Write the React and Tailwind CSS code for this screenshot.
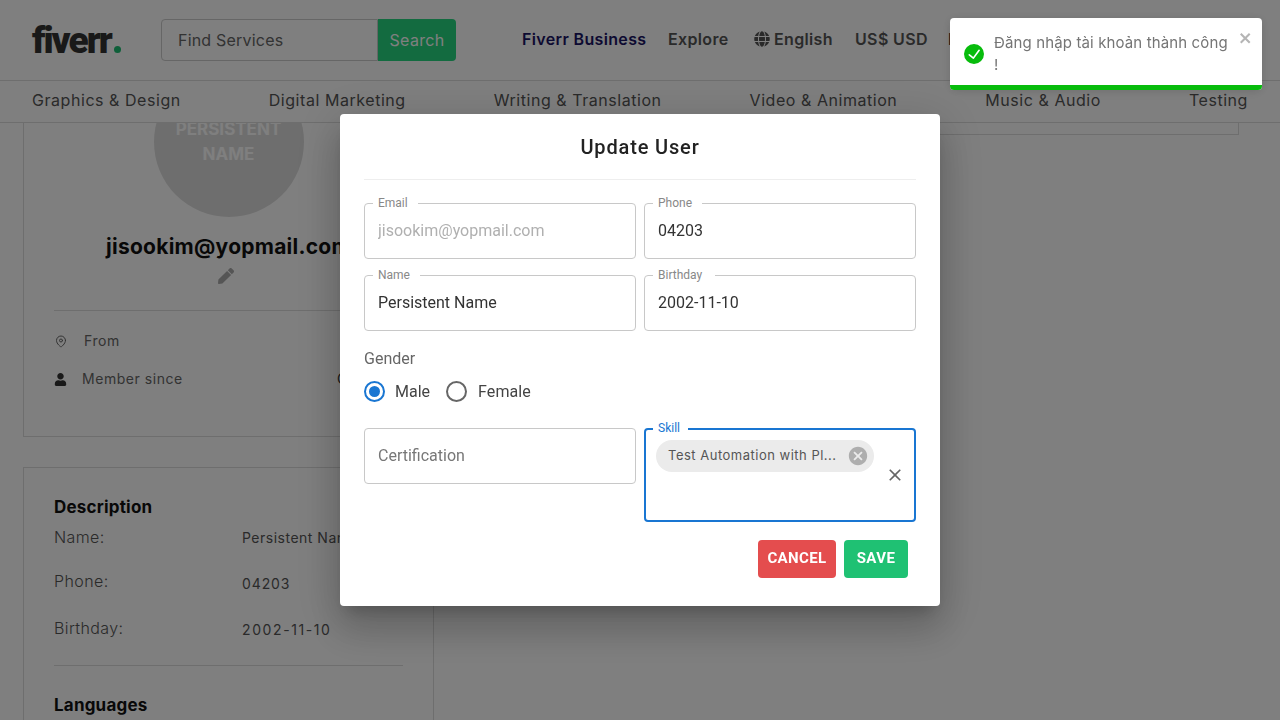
import React from 'react';
import { FaGlobe, FaPen, FaUser } from 'react-icons/fa';
import { FiMapPin } from 'react-icons/fi';

const categories = ['Graphics & Design', 'Digital Marketing', 'Writing & Translation', 'Video & Animation', 'Music & Audio', 'Testing'];

function Field({ label, value, disabled, notch = 'pr-[10px]' }) {
  return (
    <div className="relative h-14 rounded border border-[#c8c8c8]">
      <span className={`absolute -top-[8px] left-[8px] bg-white pl-[5px] text-xs leading-[14px] text-[#888] ${notch}`}>{label}</span>
      <input
        readOnly
        value={value}
        className={`h-full w-full rounded bg-transparent px-[13px] pb-[2px] text-base outline-none ${disabled ? 'text-[#b0b0b0]' : 'text-[#333]'}`}
      />
    </div>
  );
}

function InfoRow({ label, value, rowClass, valueClass }) {
  return (
    <div className={`flex items-start ${rowClass}`}>
      <span className="w-[188px] text-base leading-6 font-light tracking-[0.4px] text-[#555]">{label}</span>
      <span className={`whitespace-nowrap text-sm leading-5 text-[#555] ${valueClass}`}>{value}</span>
    </div>
  );
}

export default function App() {
  return (
    <div className="h-screen overflow-hidden bg-white font-[Inter,sans-serif]">
      <header className="relative z-10 bg-white">
        <div className="flex h-[81px] items-center border-b border-[#ddd] pl-8">
          <div className="flex w-[129px] items-baseline font-[Roboto,sans-serif] text-[37px] leading-none font-black tracking-[-2px] text-[#333]">
            fiverr<span className="ml-[3px] h-[7px] w-[7px] rounded-full bg-[#1dbf73]"></span>
          </div>
          <div className="flex h-[42px] w-[295px]">
            <input
              placeholder="Find Services"
              className="min-w-0 flex-1 rounded-l border border-[#ccc] px-4 text-base tracking-[0.2px] text-[#666] outline-none placeholder:text-[#666]"
            />
            <button className="w-[78px] rounded-r bg-[#26d680] text-base tracking-[0.3px] text-white">Search</button>
          </div>
          <nav className="ml-[66px] flex items-center whitespace-nowrap pb-[2px] text-base font-semibold tracking-[0.35px] text-[#555]">
            <a className="w-[146px] text-[#1b1464]">Fiverr Business</a>
            <a className="w-[86px]">Explore</a>
            <FaGlobe className="mr-[4px] text-base" />
            <a className="w-[81px]">English</a>
            <a className="w-[93px]">US$ USD</a>
            <a className="text-[#333]">Become a Seller</a>
          </nav>
        </div>
        <div className="flex h-[42px] items-center justify-between border-b border-[#ddd] px-8 pb-1 text-base tracking-[0.55px] text-[#555]">
          {categories.map((c) => <a key={c}>{c}</a>)}
        </div>
      </header>

      <main className="-mt-[87px] flex gap-[30px] pl-[23px] pr-[41px]">
        <div className="w-[411px] shrink-0">
          <section className="h-[401px] border border-[#ddd] px-[30px] pt-[30px]">
            <div className="mx-auto flex h-[150px] w-[150px] items-center justify-center rounded-full bg-[#ddd] pb-[1px] text-center text-[17px] leading-[25px] font-bold text-white">
              PERSISTENT<br />NAME
            </div>
            <h2 className="mt-[15px] whitespace-nowrap text-center text-[21px] leading-[30px] font-bold tracking-[0.25px] text-[#111]">jisookim@yopmail.com</h2>
            <FaPen className="ml-[164px] mt-[6px] text-base text-[#aaa]" />
            <hr className="mt-[26px] border-[#ddd]" />
            <div className="mt-[20px] flex items-center text-sm tracking-[0.55px] text-[#666]">
              <FiMapPin className="ml-[1px] w-[28px] pr-[16px] text-[13px]" />
              <span className="pl-[1px]">From</span>
            </div>
            <div className="mt-[18px] flex items-center text-sm tracking-[0.55px] text-[#666]">
              <FaUser className="mr-[15px] text-[13px] text-[#333]" />
              <span>Member since</span>
              <span className="ml-auto w-[66px] whitespace-nowrap text-[#333]">Oct 2022</span>
            </div>
          </section>

          <section className="mt-[30px] h-[400px] border border-[#ddd] px-[30px] pt-[29px]">
            <h3 className="text-[17px] leading-[20px] font-bold tracking-[0.2px] text-[#111]">Description</h3>
            <InfoRow label="Name:" value="Persistent Name" rowClass="mt-[8px]" valueClass="mt-[3px] tracking-[0.5px]" />
            <InfoRow label="Phone:" value="04203" rowClass="mt-[20px]" valueClass="mt-[5px] tracking-[0.9px]" />
            <InfoRow label="Birthday:" value="2002-11-10" rowClass="mt-[22px]" valueClass="mt-[4px] tracking-[1.6px]" />
            <hr className="mt-[25px] border-[#ddd]" />
            <h3 className="mt-[29px] text-[17px] leading-[20px] font-bold tracking-[0.2px] text-[#111]">Languages</h3>
          </section>
        </div>
        <section className="h-[99px] flex-1 border border-[#ddd]"></section>
      </main>

      {/* modal */}
      <div className="fixed inset-0 z-20 flex items-center justify-center bg-black/50 font-[Roboto,sans-serif]">
        <div className="h-[492px] w-[600px] rounded bg-white px-6 shadow-[0_11px_15px_-7px_rgba(0,0,0,0.2),0_24px_38px_3px_rgba(0,0,0,0.14),0_9px_46px_8px_rgba(0,0,0,0.12)]">
          <h2 className="h-[66px] border-b border-[#eee] pt-[19px] text-center text-xl leading-[28px] font-medium tracking-[0.85px] text-[#222]">Update User</h2>
          <div className="mt-[23px] grid grid-cols-2 gap-x-2 gap-y-4">
            <Field label="Email" value="jisookim@yopmail.com" disabled />
            <Field label="Phone" value="04203" />
            <Field label="Name" value="Persistent Name" />
            <Field label="Birthday" value="2002-11-10" notch="pr-[13px]" />
          </div>
          <p className="mt-[18px] text-base leading-[20px] text-[#666]">Gender</p>
          <div className="mt-[10px] flex h-[24px] items-center text-base text-[#444]">
            <span className="flex h-[21px] w-[21px] items-center justify-center rounded-full border-2 border-[#1976d2]">
              <span className="h-[11px] w-[11px] rounded-full bg-[#1976d2]"></span>
            </span>
            <span className="ml-[10px] mt-[2px]">Male</span>
            <span className="ml-[16px] h-[21px] w-[21px] rounded-full border-2 border-[#666]"></span>
            <span className="ml-[11px] mt-[2px] tracking-[0.1px]">Female</span>
          </div>
          <div className="mt-[25px] grid grid-cols-2 items-start gap-x-2">
            <div className="h-14 rounded border border-[#c8c8c8]">
              <input placeholder="Certification" className="h-full w-full bg-transparent px-[13px] pb-[2px] text-base outline-none placeholder:text-[#777]" />
            </div>
            <div className="relative flex h-[94px] items-start rounded border-2 border-[#1976d2] pl-[10px] pt-[10px]">
              <span className="absolute -top-[9px] left-[7px] bg-white pl-[5px] pr-[8px] text-xs leading-[14px] text-[#1976d2]">Skill</span>
              <span className="flex h-8 w-[218px] items-center rounded-full bg-[#ebebeb] pl-3 pr-[5px] font-[Inter,sans-serif] text-[13px] tracking-[0.5px] text-[#555]">
                <span className="flex-1 whitespace-nowrap">Test Automation with Pl...</span>
                <svg viewBox="0 0 24 24" className="h-[22px] w-[22px] fill-[#aeaeae]">
                  <path d="M12 2C6.47 2 2 6.47 2 12s4.47 10 10 10 10-4.47 10-10S17.53 2 12 2zm5 13.59L15.59 17 12 13.41 8.41 17 7 15.59 10.59 12 7 8.41 8.41 7 12 10.59 15.59 7 17 8.41 13.41 12 17 15.59z" />
                </svg>
              </span>
              <svg viewBox="0 0 24 24" className="ml-[11px] mt-[25px] h-5 w-5 fill-[#666]">
                <path d="M19 6.41L17.59 5 12 10.59 6.41 5 5 6.41 10.59 12 5 17.59 6.41 19 12 13.41 17.59 19 19 17.59 13.41 12z" />
              </svg>
            </div>
          </div>
          <div className="mr-2 mt-[18px] flex justify-end gap-2 text-[15px] font-bold tracking-[0.4px] text-white">
            <button className="h-[38px] w-[78px] rounded-sm bg-[#e44d4e] pb-[2px]">CANCEL</button>
            <button className="h-[38px] w-[64px] rounded-sm bg-[#1fc173] pb-[2px]">SAVE</button>
          </div>
        </div>
      </div>

      {/* toast */}
      <div className="fixed right-[18px] top-[18px] z-30 h-[72px] w-[312px] overflow-hidden rounded bg-white shadow-[0_1px_10px_rgba(0,0,0,0.1),0_2px_15px_rgba(0,0,0,0.05)]">
        <div className="flex h-[67px] pl-[14px] pt-[14px]">
          <svg viewBox="0 0 24 24" className="mt-[12px] h-5 w-5 shrink-0 fill-[#07bc0c]">
            <path d="M12 0a12 12 0 1012 12A12.014 12.014 0 0012 0zm6.927 8.2l-6.845 9.289a1.011 1.011 0 01-1.43.188l-4.888-3.908a1 1 0 111.25-1.562l4.076 3.261 6.227-8.451a1 1 0 111.61 1.183z" />
          </svg>
          <p className="ml-[10px] text-[15px] leading-[22px] tracking-[0.13px] whitespace-nowrap text-[#757575]">Đăng nhập tài khoản thành công<br />!</p>
          <svg viewBox="0 0 14 16" className="ml-auto mr-[9px] -mt-[2px] h-4 w-[14px] fill-[#b5b5b5]">
            <path d="M7.71 8.23l3.75 3.75-1.48 1.48-3.75-3.75-3.75 3.75L1 11.98l3.75-3.75L1 4.48 2.48 3l3.75 3.75L9.98 3l1.48 1.48-3.75 3.75z" />
          </svg>
        </div>
        <div className="h-[5px] bg-[#07bc0c]"></div>
      </div>
    </div>
  );
}
